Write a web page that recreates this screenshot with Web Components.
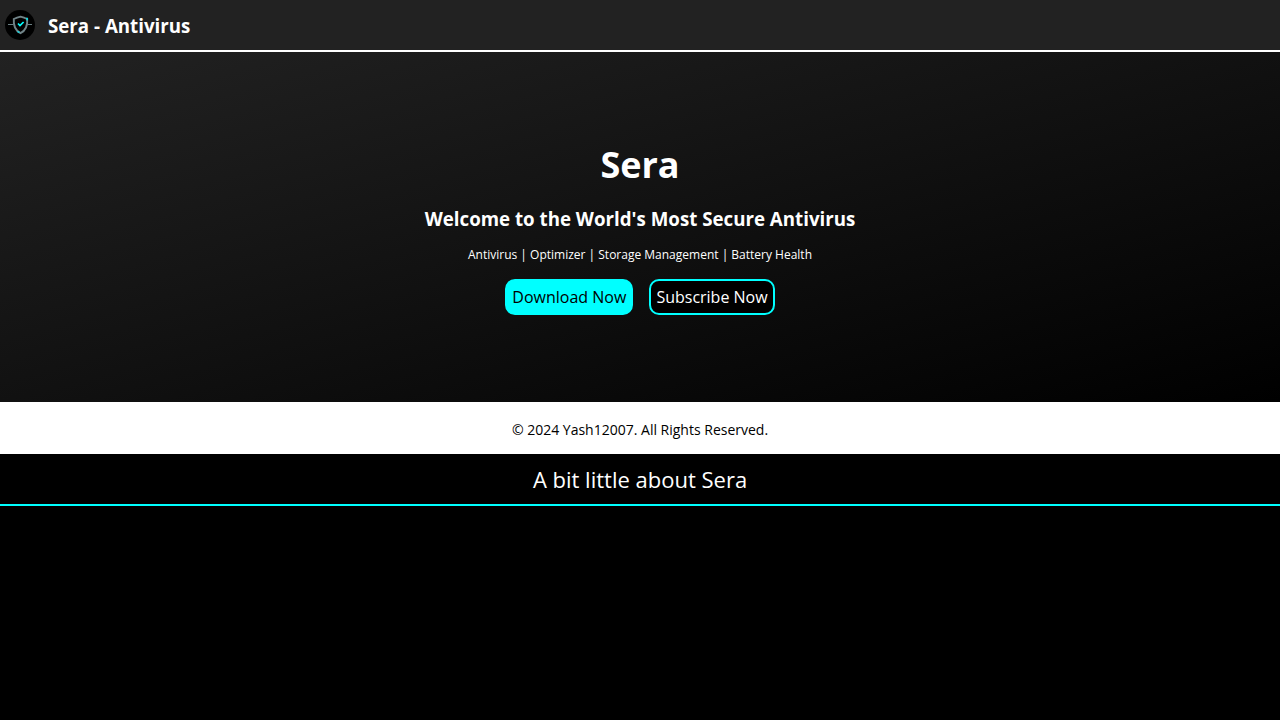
<!DOCTYPE html>
<html lang="en">
<head>
<meta charset="utf-8">
<title>Sera - Antivirus</title>
<style>
body { margin: 0; background: #000; color: #fff; font-family: "Open Sans", sans-serif; }
</style>
</head>
<body>
<sera-header>Sera - Antivirus</sera-header>
<main>
<sera-hero>
  <h1 slot="title">Sera</h1>
  <h3 slot="welcome">Welcome to the World's Most Secure Antivirus</h3>
  <p slot="features">Antivirus | Optimizer | Storage Management | Battery Health</p>
  <sera-button variant="solid">Download Now</sera-button>
  <sera-button>Subscribe Now</sera-button>
</sera-hero>
<sera-copyright>© 2024 Yash12007. All Rights Reserved.</sera-copyright>
<sera-about>A bit little about Sera</sera-about>
</main>
<script>
function define(name, html) {
  const template = document.createElement('template');
  template.innerHTML = html;
  customElements.define(name, class extends HTMLElement {
    constructor() {
      super();
      this.attachShadow({ mode: 'open' }).append(template.content.cloneNode(true));
    }
  });
}

define('sera-logo', `
<style>
:host { display: block; width: 30px; height: 30px; }
svg { display: block; width: 100%; height: 100%; }
</style>
<svg viewBox="0 0 30 30" aria-hidden="true">
  <circle cx="15" cy="15" r="15" fill="#000"/>
  <path d="M3 14.500h5M22.500 14.500h4.500" stroke="#6b8084" stroke-width="1.200"/>
  <path d="M15.500 6.700C13 7.300 11 8 8.800 9c-.5 6 .5 11 6.700 14.200 6.200-3.200 7.200-8.200 6.700-14.200-2.200-1-4.200-1.700-6.700-2.300z" fill="none" stroke="#718488" stroke-width="1.900"/>
  <path d="M21 8.500h1.200v2M12.500 21.300l2 1.400" fill="none" stroke="#16d5dc" stroke-width="1.500"/>
  <path d="M13 13.500l2 2 3.600-3.500" fill="none" stroke="#0ff" stroke-width="1.700"/>
</svg>`);

define('sera-header', `
<style>
:host { display: block; }
header { display: flex; align-items: center; gap: 13px; min-height: 50px; padding: 0 5px; background: #222; border-bottom: 2px solid #fff; }
h3 { margin: 0; padding-top: 2px; line-height: 26px; }
</style>
<header><sera-logo></sera-logo><h3><slot></slot></h3></header>`);

define('sera-button', `
<style>
:host { display: block; }
button { display: block; padding: 5px; border: 2px solid #0ff; border-radius: 10px; background: #000; color: #fff; font: 16px/22px "Open Sans", sans-serif; cursor: pointer; }
:host([variant="solid"]) button { background: #0ff; color: #000; }
</style>
<button type="button"><slot></slot></button>`);

define('sera-hero', `
<style>
:host { display: block; }
section { display: flex; flex-direction: column; align-items: center; box-sizing: border-box; min-height: 350px; padding-top: 88px; text-align: center; background: linear-gradient(to bottom right, #222, #000); }
::slotted(h1) { margin: 0; font-size: 36px; line-height: 50px; }
::slotted(h3) { margin: 16px 0 0; line-height: 26px; }
::slotted(p) { margin: 14px 0 0; font-size: 12px; line-height: 17px; }
.actions { display: flex; flex-wrap: wrap; justify-content: center; gap: 16px; margin-top: 16px; }
</style>
<section>
  <slot name="title"></slot>
  <slot name="welcome"></slot>
  <slot name="features"></slot>
  <div class="actions"><slot></slot></div>
</section>`);

define('sera-copyright', `
<style>
:host { display: block; padding: 18px 16px 14px; background: #fff; color: #000; text-align: center; font-size: 14px; line-height: 20px; }
</style>
<slot></slot>`);

define('sera-about', `
<style>
:host { display: block; }
h2 { margin: 0; padding: 10px; border-bottom: 2px solid #0ff; text-align: center; font-size: 22px; line-height: 30px; font-weight: 400; }
</style>
<h2><slot></slot></h2>`);
</script>
</body>
</html>
